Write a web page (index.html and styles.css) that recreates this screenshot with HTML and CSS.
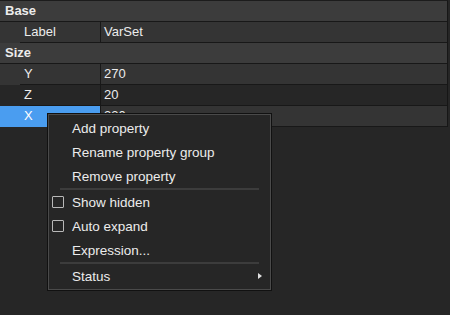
FILE: index.html
```html
<!DOCTYPE html>
<html>
<head>
<meta charset="utf-8">
<link rel="stylesheet" href="styles.css">
</head>
<body>
<div class="editor">
  <div class="grid">
    <div class="group">Base</div>
    <div class="prop alt1">
      <div class="indent"></div>
      <div class="name">Label</div>
      <div class="value">VarSet</div>
    </div>
    <div class="group">Size</div>
    <div class="prop alt1">
      <div class="indent"></div>
      <div class="name">Y</div>
      <div class="value">270</div>
    </div>
    <div class="prop alt2">
      <div class="indent"></div>
      <div class="name">Z</div>
      <div class="value">20</div>
    </div>
    <div class="prop alt1 selected">
      <div class="indent"></div>
      <div class="name">X</div>
      <div class="value">330</div>
    </div>
  </div>

  <div class="menu">
    <div class="item"><span class="slot"></span><span>Add property</span></div>
    <div class="item"><span class="slot"></span><span>Rename property group</span></div>
    <div class="item"><span class="slot"></span><span>Remove property</span></div>
    <div class="sep"></div>
    <div class="item"><span class="slot"><span class="check"></span></span><span>Show hidden</span></div>
    <div class="item"><span class="slot"><span class="check"></span></span><span>Auto expand</span></div>
    <div class="item"><span class="slot"></span><span>Expression...</span></div>
    <div class="sep"></div>
    <div class="item"><span class="slot"></span><span class="grow">Status</span><span class="arrow"></span></div>
  </div>
</div>
</body>
</html>
```

FILE: styles.css
```css
html, body {
  margin: 0;
  padding: 0;
}
body {
  width: 450px;
  height: 315px;
  background: #262626;
  font-family: "Liberation Sans", Arial, sans-serif;
  color: #ececec;
  overflow: hidden;
}
.editor {
  position: relative;
  width: 450px;
  height: 315px;
}
.grid {
  width: 447px;
  border-top: 1px solid #1c1c1c;
  border-right: 1px solid #161616;
  font-size: 13px;
}
.group {
  height: 20px;
  line-height: 20px;
  border-bottom: 1px solid #181818;
  background: #3c3c3c;
  font-weight: bold;
  padding-left: 5px;
}
.prop {
  display: flex;
  height: 21px;
}
.alt1 { background: #343434; }
.alt2 { background: #262626; }
.indent {
  width: 20px;
  height: 21px;
}
.name {
  width: 76px;
  height: 20px;
  line-height: 20px;
  padding-left: 4px;
  border-bottom: 1px solid #181818;
  border-right: 1px solid #181818;
}
.value {
  flex: 1;
  height: 20px;
  line-height: 20px;
  padding-left: 3px;
  border-bottom: 1px solid #181818;
}
.selected .indent,
.selected .name {
  background: #4a9df0;
  color: #ffffff;
}
.selected .name {
  border-bottom-color: #4a9df0;
}

.menu {
  position: absolute;
  left: 48px;
  top: 114px;
  width: 221px;
  height: 173px;
  background: #262626;
  border: 1px solid #4a4a4a;
  box-shadow: 0 0 0 1px #111111;
  padding-top: 1px;
  box-sizing: content-box;
  font-size: 13.5px;
  color: #ececec;
}
.menu .item {
  display: flex;
  align-items: center;
  height: 24px;
}
.slot {
  width: 23px;
  display: flex;
  align-items: center;
  padding-left: 3px;
  box-sizing: border-box;
}
.check {
  width: 10px;
  height: 10px;
  border: 1px solid #b8b8b8;
  border-radius: 1px;
}
.grow { flex: 1; }
.arrow {
  width: 0;
  height: 0;
  border-top: 3px solid transparent;
  border-bottom: 3px solid transparent;
  border-left: 4px solid #e0e0e0;
  margin-right: 8px;
}
.sep {
  height: 2px;
  margin: 0 11px 0 11px;
  background: #3c3c3c;
}
```
